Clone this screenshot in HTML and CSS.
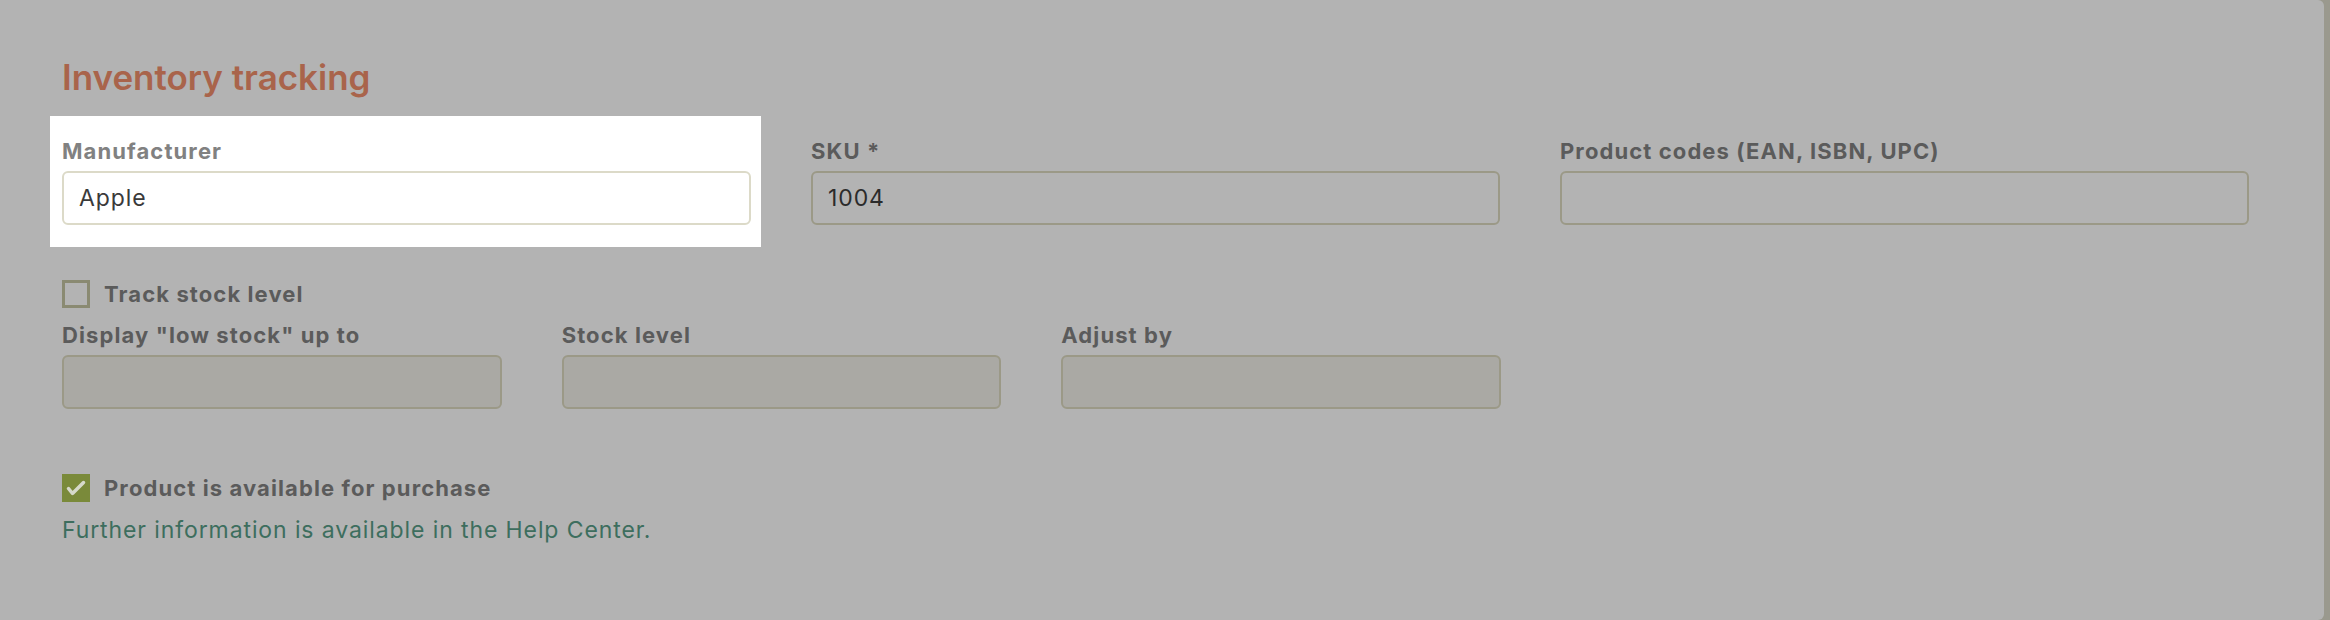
FILE: index.html
```html
<!DOCTYPE html>
<html lang="en">
<head>
<meta charset="utf-8">
<title>Inventory tracking</title>
<link rel="stylesheet" href="styles.css">
</head>
<body>
<div class="card">
  <h2 class="title">Inventory tracking</h2>
  <div class="grid3">
    <div class="field spot">
      <label class="lbl">Manufacturer</label>
      <input class="input" type="text" value="Apple">
    </div>
    <div class="field">
      <label class="lbl">SKU *</label>
      <input class="input" type="text" value="1004">
    </div>
    <div class="field">
      <label class="lbl">Product codes (EAN, ISBN, UPC)</label>
      <input class="input" type="text" value="">
    </div>
  </div>
  <div class="check-row track">
    <span class="box"></span>
    <span class="check-label">Track stock level</span>
  </div>
  <div class="grid-stock">
    <div class="field">
      <label class="lbl">Display "low stock" up to</label>
      <input class="input disabled" type="text" value="" disabled>
    </div>
    <div class="field">
      <label class="lbl">Stock level</label>
      <input class="input disabled" type="text" value="" disabled>
    </div>
    <div class="field">
      <label class="lbl">Adjust by</label>
      <input class="input disabled" type="text" value="" disabled>
    </div>
  </div>
  <div class="check-row avail">
    <span class="box checked"><svg viewBox="0 0 28 28" width="28" height="28"><polyline points="6.5,14.5 10.5,19.5 21.5,8.5" fill="none" stroke="#d6d9ca" stroke-width="3.5" stroke-linecap="round" stroke-linejoin="round"/></svg></span>
    <span class="check-label">Product is available for purchase</span>
  </div>
  <p class="help">Further information is available in the Help Center.</p>
</div>
</body>
</html>
```
FILE: styles.css
```css
html, body {
  margin: 0;
  padding: 0;
}
body {
  background: #9a998e;
  font-family: Inter, "Noto Sans", "Liberation Sans", sans-serif;
  width: 2330px;
  height: 620px;
  overflow: hidden;
}
.card {
  width: 2324px;
  height: 620px;
  box-sizing: border-box;
  padding: 56px 75px 0 62px;
  background: #b3b3b3;
  border-radius: 0 6px 6px 0;
}
.title {
  margin: 0;
  font-size: 35px;
  line-height: 42px;
  font-weight: 600;
  color: #a9644b;
}
.grid3 {
  display: grid;
  grid-template-columns: repeat(3, 1fr);
  column-gap: 60px;
  margin-top: 39px;
}
.field {
  display: flex;
  flex-direction: column;
}
.lbl {
  display: block;
  font-size: 22px;
  line-height: 28px;
  font-weight: 700;
  letter-spacing: 1.1px;
  color: #5b5b5b;
  margin-bottom: 6px;
}
.input {
  display: block;
  box-sizing: border-box;
  width: 100%;
  height: 54px;
  margin: 0;
  border: 2px solid #9b9987;
  border-radius: 6px;
  background: #b3b3b3;
  padding: 0 15px;
  font-family: Inter, "Noto Sans", "Liberation Sans", sans-serif;
  font-size: 23px;
  font-weight: 400;
  letter-spacing: 0.9px;
  color: #2b2b2b;
  outline: none;
}
.input.disabled {
  background: #aaa9a4;
}
.spot {
  position: relative;
  z-index: 0;
}
.spot::before {
  content: "";
  position: absolute;
  left: -12px;
  right: -10px;
  top: -21px;
  bottom: -22px;
  background: #ffffff;
  z-index: -1;
}
.spot .lbl {
  color: #818181;
}
.spot .input {
  background: #ffffff;
  border-color: #dcdac8;
  color: #3a3a3a;
}
.check-row {
  display: flex;
  align-items: center;
  gap: 14px;
  height: 28px;
}
.track {
  margin-top: 55px;
}
.avail {
  margin-top: 65px;
}
.box {
  display: block;
  width: 28px;
  height: 28px;
  box-sizing: border-box;
  border: 3px solid #8a8a72;
  flex: none;
}
.box.checked {
  border: none;
  background: #7a8a3a;
}
.box svg {
  display: block;
}
.check-label {
  font-size: 22px;
  line-height: 28px;
  font-weight: 700;
  letter-spacing: 1.1px;
  color: #5b5b5b;
}
.grid-stock {
  width: 1439px;
  display: grid;
  grid-template-columns: repeat(3, 1fr);
  column-gap: 60px;
  margin-top: 13px;
}
.help {
  margin: 14px 0 0;
  font-size: 23px;
  line-height: 28px;
  letter-spacing: 0.9px;
  color: #3d6e5e;
}
```
